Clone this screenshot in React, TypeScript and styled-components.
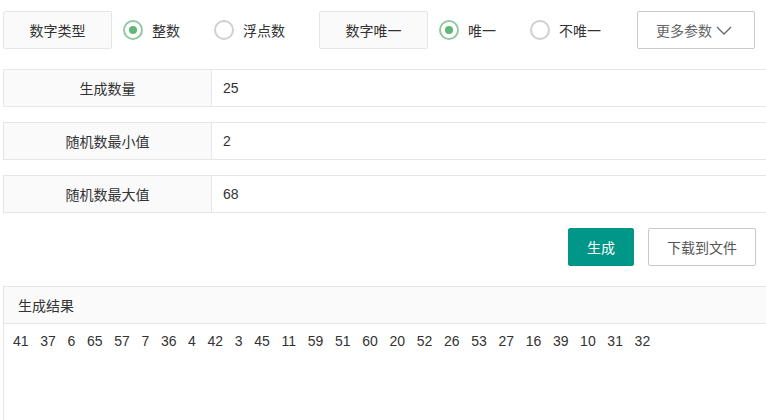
import styled, { createGlobalStyle } from "styled-components";

const GlobalStyle = createGlobalStyle`
  html, body {
    margin: 0;
    padding: 0;
    background: #fff;
    overflow: hidden;
  }
  body {
    font-family: "Liberation Sans", "Noto Sans CJK SC", sans-serif;
    font-size: 14px;
    color: #333;
  }
`;

const Page = styled.div`
  width: 790px;
  padding: 11px 0 0 3px;
  box-sizing: content-box;
`;

const TopBar = styled.div`
  display: flex;
  align-items: center;
  height: 38px;
  margin-bottom: 20px;
`;

const TagLabel = styled.div`
  box-sizing: border-box;
  width: 109px;
  height: 38px;
  display: flex;
  align-items: center;
  justify-content: center;
  background: #fafafa;
  border: 1px solid #e6e6e6;
  border-radius: 2px;
  color: #333;
`;

const RadioGroup = styled.div<{ $trail?: number }>`
  display: flex;
  align-items: center;
  gap: 34px;
  margin: 0 ${({ $trail = 34 }) => $trail}px 0 11px;
`;

const RadioOption = styled.label`
  display: flex;
  align-items: center;
  gap: 9px;
  cursor: pointer;
  color: #333;
`;

const RadioMark = styled.span<{ $checked?: boolean }>`
  box-sizing: border-box;
  width: 20px;
  height: 20px;
  border-radius: 50%;
  border: 2px solid ${({ $checked }) => ($checked ? "#93c8a2" : "#cfcfcf")};
  display: flex;
  align-items: center;
  justify-content: center;

  &::after {
    content: "";
    width: 8px;
    height: 8px;
    border-radius: 50%;
    background: ${({ $checked }) => ($checked ? "#5fb878" : "transparent")};
  }
`;

const Button = styled.button<{ $primary?: boolean }>`
  box-sizing: border-box;
  height: 38px;
  padding: 0 18px;
  display: inline-flex;
  align-items: center;
  font-family: inherit;
  font-size: 14px;
  border-radius: 2px;
  cursor: pointer;
  border: 1px solid ${({ $primary }) => ($primary ? "#009688" : "#c9c9c9")};
  background: ${({ $primary }) => ($primary ? "#009688" : "#fff")};
  color: ${({ $primary }) => ($primary ? "#fff" : "#555")};
`;

const MoreButton = styled(Button)`
  padding: 0 22px 0 18px;
  color: #666;

  svg {
    margin-left: 4px;
  }
`;

const FieldRow = styled.div`
  box-sizing: border-box;
  display: flex;
  height: 38px;
  border: 1px solid #e6e6e6;
  margin-bottom: 15px;
`;

const FieldLabel = styled.div`
  width: 207px;
  display: flex;
  align-items: center;
  justify-content: center;
  background: #fafafa;
  border-right: 1px solid #e6e6e6;
  color: #333;
`;

const FieldValue = styled.div`
  flex: 1;
  display: flex;
  align-items: center;
  padding-left: 11px;
  color: #333;
`;

const ButtonBar = styled.div`
  display: flex;
  justify-content: flex-end;
  gap: 14px;
  padding-right: 37px;
  margin-bottom: 20px;
`;

const ResultPanel = styled.div`
  border: 1px solid #e6e6e6;
  border-bottom: none;
  height: 134px;
`;

const ResultHeader = styled.div`
  height: 36px;
  display: flex;
  align-items: center;
  padding-left: 14px;
  background: #fafafa;
  border-bottom: 1px solid #e6e6e6;
  color: #333;
`;

const ResultBody = styled.div`
  padding: 6px 9px;
  line-height: 22px;
  white-space: pre-wrap;
  color: #333;
`;

const numbers = [41, 37, 6, 65, 57, 7, 36, 4, 42, 3, 45, 11, 59, 51, 60, 20, 52, 26, 53, 27, 16, 39, 10, 31, 32];

const fields = [
  { label: "生成数量", value: "25" },
  { label: "随机数最小值", value: "2" },
  { label: "随机数最大值", value: "68" },
];

const Chevron = () => (
  <svg width="16" height="9" viewBox="0 0 16 9" fill="none">
    <path d="M1 1 L8 8 L15 1" stroke="#666" strokeWidth="1.3" />
  </svg>
);

const App = () => {
  return (
    <>
      <GlobalStyle />
      <Page>
        <TopBar>
          <TagLabel>数字类型</TagLabel>
          <RadioGroup>
            <RadioOption>
              <RadioMark $checked />
              整数
            </RadioOption>
            <RadioOption>
              <RadioMark />
              浮点数
            </RadioOption>
          </RadioGroup>
          <TagLabel>数字唯一</TagLabel>
          <RadioGroup $trail={36}>
            <RadioOption>
              <RadioMark $checked />
              唯一
            </RadioOption>
            <RadioOption>
              <RadioMark />
              不唯一
            </RadioOption>
          </RadioGroup>
          <MoreButton>
            更多参数
            <Chevron />
          </MoreButton>
        </TopBar>

        {fields.map((f) => (
          <FieldRow key={f.label}>
            <FieldLabel>{f.label}</FieldLabel>
            <FieldValue>{f.value}</FieldValue>
          </FieldRow>
        ))}

        <ButtonBar>
          <Button $primary>生成</Button>
          <Button>下载到文件</Button>
        </ButtonBar>

        <ResultPanel>
          <ResultHeader>生成结果</ResultHeader>
          <ResultBody>{numbers.join("   ")}</ResultBody>
        </ResultPanel>
      </Page>
    </>
  );
};

export default App;
